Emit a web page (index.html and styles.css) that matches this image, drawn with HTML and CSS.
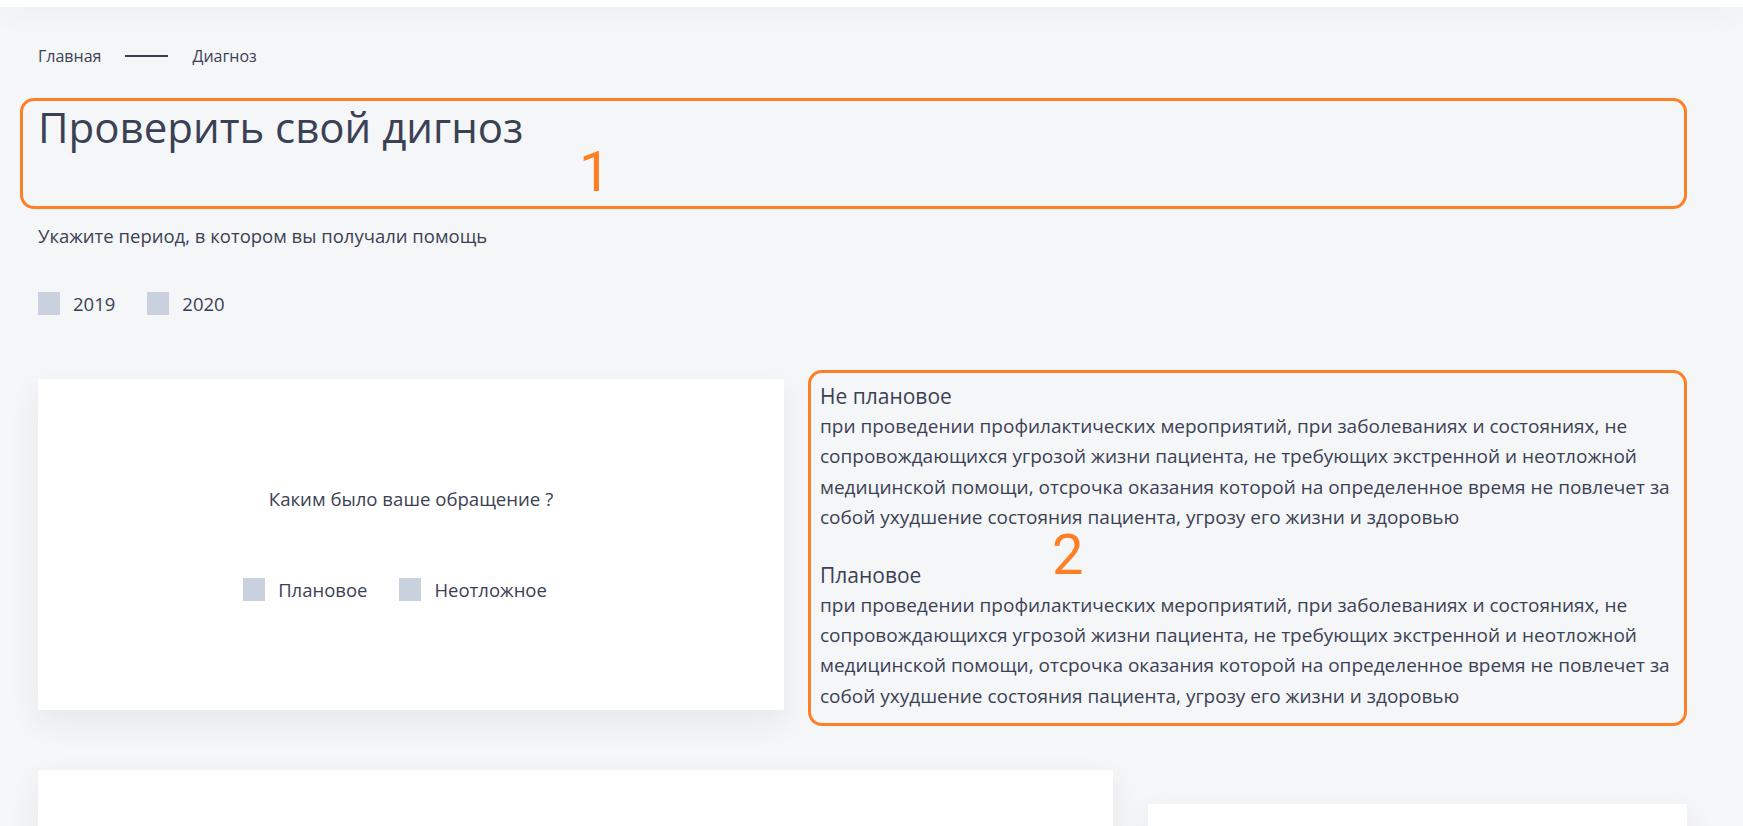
FILE: index.html
```html
<!DOCTYPE html>
<html lang="ru">
<head>
<meta charset="utf-8">
<title>Проверить свой дигноз</title>
<link rel="stylesheet" href="styles.css">
</head>
<body>
<div class="topbar"></div>
<main class="page">
  <nav class="crumbs">
    <span class="crumb">Главная</span>
    <span class="crumb-line"></span>
    <span class="crumb">Диагноз</span>
  </nav>

  <section class="anno anno-title">
    <h1 class="title">Проверить свой дигноз</h1>
    <span class="anno-num num-1">1</span>
  </section>

  <p class="hint">Укажите период, в котором вы получали помощь</p>

  <div class="checks">
    <label class="check"><span class="box"></span><span class="check-label">2019</span></label>
    <label class="check"><span class="box"></span><span class="check-label">2020</span></label>
  </div>

  <div class="row">
    <div class="card card-question">
      <p class="question">Каким было ваше обращение ?</p>
      <div class="checks checks-center">
        <label class="check"><span class="box"></span><span class="check-label">Плановое</span></label>
        <label class="check"><span class="box"></span><span class="check-label">Неотложное</span></label>
      </div>
    </div>

    <section class="anno anno-info">
      <h3 class="info-title">Не плановое</h3>
      <p class="info-text">при проведении профилактических мероприятий, при заболеваниях и состояниях, не сопровождающихся угрозой жизни пациента, не требующих экстренной и неотложной медицинской помощи, отсрочка оказания которой на определенное время не повлечет за собой ухудшение состояния пациента, угрозу его жизни и здоровью</p>
      <h3 class="info-title info-title-2">Плановое</h3>
      <p class="info-text">при проведении профилактических мероприятий, при заболеваниях и состояниях, не сопровождающихся угрозой жизни пациента, не требующих экстренной и неотложной медицинской помощи, отсрочка оказания которой на определенное время не повлечет за собой ухудшение состояния пациента, угрозу его жизни и здоровью</p>
      <span class="anno-num num-2">2</span>
    </section>
  </div>

  <div class="row row-bottom">
    <div class="card card-wide"></div>
    <div class="card card-side"></div>
  </div>
</main>
</body>
</html>
```

FILE: styles.css
```css
* { box-sizing: border-box; }

html, body {
  margin: 0;
  padding: 0;
  background: #f5f6f8;
  overflow: hidden;
}

body {
  font-family: "Open Sans", Roboto, "Liberation Sans", sans-serif;
  color: #3b4154;
}

.topbar {
  height: 7px;
  background: #ffffff;
  box-shadow: 0 6px 24px rgba(40, 45, 60, 0.07);
}

.page {
  padding: 39px 56px 0 38px;
}

.crumbs {
  display: flex;
  align-items: center;
  height: 20px;
  font-size: 16px;
  color: #3b4154;
}

.crumb-line {
  width: 43px;
  height: 2px;
  background: #3a4050;
  margin: 0 24px 0 24px;
}

.anno {
  position: relative;
  border: 3px solid #ff7f27;
  border-radius: 14px;
}

.anno-title {
  margin: 32px 0 0 -18px;
  height: 111px;
  padding: 0 0 0 15px;
}

.title {
  margin: 0;
  padding-top: 2px;
  font-size: 42px;
  font-weight: 400;
  line-height: 48px;
  color: #3b4154;
}

.anno-num {
  position: absolute;
  font-family: Roboto, sans-serif;
  font-size: 56px;
  line-height: 40px;
  color: #ff7f27;
  font-weight: 400;
}

.num-1 { left: 556px; top: 51px; }
.num-2 { left: 241px; top: 162px; }

.hint {
  margin: 16px 0 0;
  font-size: 18.5px;
  line-height: 22px;
}

.checks {
  display: flex;
  margin-top: 44px;
}

.check {
  display: flex;
  align-items: center;
  margin-right: 32px;
  font-size: 18.5px;
}

.box {
  width: 22px;
  height: 23px;
  background: #c9d1de;
  margin-right: 13px;
}

.row {
  display: flex;
  align-items: flex-start;
  margin-top: 54px;
}

.card {
  background: #ffffff;
  box-shadow: 0 12px 30px rgba(40, 45, 60, 0.07);
}

.card-question {
  width: 746px;
  height: 331px;
  margin-top: 9px;
  margin-right: 24px;
  display: flex;
  flex-direction: column;
  align-items: center;
  padding-top: 108px;
}

.question {
  margin: 0;
  font-size: 18.6px;
  line-height: 24px;
}

.checks-center {
  margin-top: 66px;
  justify-content: center;
}

.anno-info {
  flex: 1;
  height: 356px;
  padding: 8px 0 0 9px;
}

.info-title {
  margin: 0;
  font-size: 21px;
  font-weight: 400;
  line-height: 30px;
}

.info-title-2 { margin-top: 27px; }

.info-text {
  margin: 0;
  max-width: 862px;
  font-size: 19px;
  line-height: 30.4px;
}

.row-bottom {
  margin-top: 44px;
}

.card-wide {
  width: 1075px;
  height: 200px;
  margin-right: 35px;
}

.card-side {
  flex: 1;
  height: 200px;
  margin-top: 34px;
}
```
